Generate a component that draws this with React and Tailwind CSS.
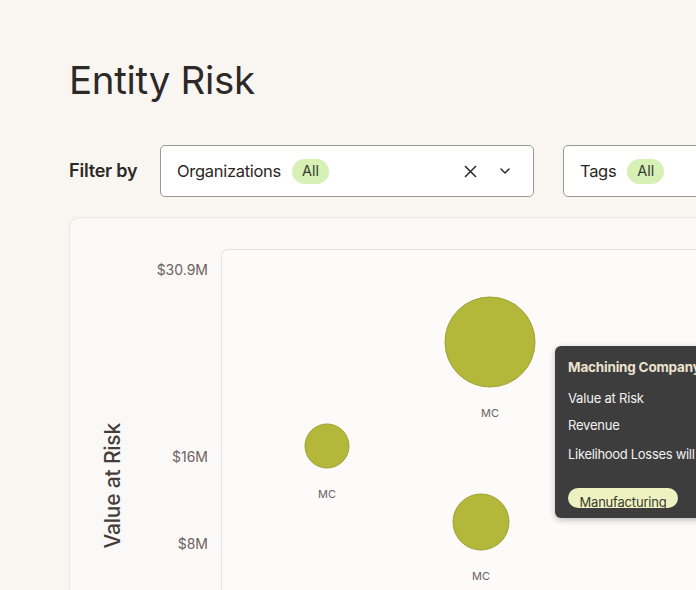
import React from "react";

const font = { fontFamily: "Inter, 'Noto Sans', sans-serif" };

function Select({ label, width, showIcons }) {
  return (
    <div
      className={`flex items-center h-[52px] bg-white border border-[#9a9794] rounded-[5px] pl-4 pr-4 shrink-0 ${width}`}
    >
      <span className="text-[16.5px] text-[#2b2724] tracking-[-0.3px]">{label}</span>
      <span className="ml-[11px] h-[25px] px-[10px] flex items-center rounded-full bg-[#d6f0b5] text-[14.5px] text-[#3b3a33]">
        All
      </span>
      {showIcons && (
        <div className="ml-auto flex items-center gap-[22px] pr-[6px]">
          <svg width="13" height="13" viewBox="0 0 13 13" fill="none" stroke="#2a2a2a" strokeWidth="1.5">
            <path d="M1 1 L12 12 M12 1 L1 12" />
          </svg>
          <svg width="12" height="8" viewBox="0 0 12 8" fill="none" stroke="#2a2a2a" strokeWidth="1.5" strokeLinecap="round" strokeLinejoin="round">
            <path d="M2 2 L6 6 L10 2" />
          </svg>
        </div>
      )}
    </div>
  );
}

export default function App() {
  const bubbles = [
    { cx: 268, cy: 92, r: 45, ly: 167 },
    { cx: 105, cy: 196, r: 22, ly: 248 },
    { cx: 259, cy: 272, r: 28, ly: 330 },
  ];
  return (
    <div className="w-[696px] h-[590px] overflow-hidden bg-[#f9f6f2] pl-[69px] pt-[58px]" style={font}>
      <h1 className="text-[38.5px] leading-[44px] text-[#2d2926] font-normal tracking-[-0.3px]">Entity Risk</h1>

      <div className="mt-[43px] flex items-center w-[800px]">
        <span className="w-[91px] text-[18px] font-semibold text-[#2d2926] tracking-[-0.2px] -mt-[2px]">Filter by</span>
        <Select label="Organizations" width="w-[374px]" showIcons />
        <div className="w-[29px] shrink-0" />
        <Select label="Tags" width="w-[240px]" />
      </div>

      <div className="mt-[20px] w-[800px] h-[420px] flex bg-[#fbf9f7] border border-[#e9e5df] rounded-[10px] pt-[31px]">
        <div className="w-[151px] shrink-0 relative">
          <div className="absolute left-[31px] top-[171px] w-[24px] h-[132px] flex items-center justify-center">
            <span className="-rotate-90 whitespace-nowrap text-[21px] font-medium text-[#453d3a] tracking-[-0.2px]">
              Value at Risk
            </span>
          </div>
          <span className="absolute right-[13px] top-[10px] text-[14px] text-[#6e6363]">$30.9M</span>
          <span className="absolute right-[13px] top-[197px] text-[14px] text-[#6e6363]">$16M</span>
          <span className="absolute right-[13px] top-[284px] text-[14px] text-[#6e6363]">$8M</span>
        </div>
        <div className="flex-1 relative bg-[#fcfbfa] border-l border-t border-[#e6e2dd] rounded-tl-[7px]">
          <svg className="absolute left-0 top-0" width="480" height="360">
            {bubbles.map((b, i) => (
              <g key={i}>
                <circle cx={b.cx} cy={b.cy} r={b.r} fill="#b3b83a" stroke="#9ea132" strokeWidth="1" />
                <text x={b.cx} y={b.ly} textAnchor="middle" fontSize="11" fill="#6a6262" fontFamily="Inter, sans-serif">
                  MC
                </text>
              </g>
            ))}
          </svg>
          <div className="absolute left-[333px] top-[96px] w-[240px] h-[172px] bg-[#3d3d3d] rounded-[6px] shadow-[0_2px_6px_rgba(0,0,0,0.25)] pl-[13px] pt-[11px]">
            <div className="text-[13.5px] font-bold text-[#ece2cd] whitespace-nowrap tracking-[-0.2px]">Machining Company</div>
            <div className="mt-[13px] text-[13px] text-[#f2f2f2] leading-[17px] tracking-[-0.2px]">Value at Risk</div>
            <div className="mt-[10px] text-[13px] text-[#f2f2f2] leading-[17px] tracking-[-0.2px]">Revenue</div>
            <div className="mt-[12px] text-[13px] text-[#f2f2f2] leading-[17px] whitespace-nowrap tracking-[-0.3px]">Likelihood Losses will occur</div>
            <div className="mt-[25px] h-[20px] w-[110px] rounded-full bg-[#eef2c0] overflow-hidden flex justify-center">
              <span className="text-[13px] text-[#3b3a33] leading-[17px] pt-[6px] whitespace-nowrap tracking-[-0.2px]">Manufacturing</span>
            </div>
          </div>
        </div>
      </div>
    </div>
  );
}
